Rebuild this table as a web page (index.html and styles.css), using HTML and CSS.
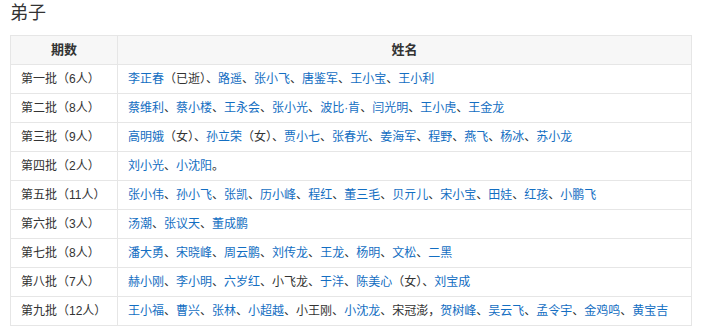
FILE: index.html
```html
<!DOCTYPE html>
<html lang="zh">
<head>
<meta charset="utf-8">
<link rel="stylesheet" href="styles.css">
</head>
<body>
<div class="page">
  <h2 class="title">弟子</h2>
  <table class="disciples">
    <colgroup><col class="c1"><col class="c2"></colgroup>
    <thead>
      <tr><th>期数</th><th>姓名</th></tr>
    </thead>
    <tbody>
      <tr><td>第一批（6人）</td><td><a>李正春</a>（已逝）、<a>路遥</a>、<a>张小飞</a>、<a>唐鉴军</a>、<a>王小宝</a>、<a>王小利</a></td></tr>
      <tr><td>第二批（8人）</td><td><a>蔡维利</a>、<a>蔡小楼</a>、<a>王永会</a>、<a>张小光</a>、<a>波比·肯</a>、<a>闫光明</a>、<a>王小虎</a>、<a>王金龙</a></td></tr>
      <tr><td>第三批（9人）</td><td><a>高明娥</a>（女）、<a>孙立荣</a>（女）、<a>贾小七</a>、<a>张春光</a>、<a>姜海军</a>、<a>程野</a>、<a>燕飞</a>、<a>杨冰</a>、<a>苏小龙</a></td></tr>
      <tr><td>第四批（2人）</td><td><a>刘小光</a>、<a>小沈阳</a>。</td></tr>
      <tr><td>第五批（11人）</td><td><a>张小伟</a>、<a>孙小飞</a>、<a>张凯</a>、<a>历小峰</a>、<a>程红</a>、<a>董三毛</a>、<a>贝亓儿</a>、<a>宋小宝</a>、<a>田娃</a>、<a>红孩</a>、<a>小鹏飞</a></td></tr>
      <tr><td>第六批（3人）</td><td><a>汤潮</a>、<a>张议天</a>、<a>董成鹏</a></td></tr>
      <tr><td>第七批（8人）</td><td><a>潘大勇</a>、<a>宋晓峰</a>、<a>周云鹏</a>、<a>刘传龙</a>、<a>王龙</a>、<a>杨明</a>、<a>文松</a>、<a>二黑</a></td></tr>
      <tr><td>第八批（7人）</td><td><a>赫小刚</a>、<a>李小明</a>、<a>六岁红</a>、小飞龙、<a>于洋</a>、<a>陈美心</a>（女）、<a>刘宝成</a></td></tr>
      <tr><td>第九批（12人）</td><td><a>王小福</a>、<a>曹兴</a>、<a>张林</a>、<a>小超越</a>、小王刚、<a>小沈龙</a>、宋冠澎，<a>贺树峰</a>、<a>吴云飞</a>、<a>孟令宇</a>、<a>金鸡鸣</a>、<a>黄宝吉</a></td></tr>
    </tbody>
  </table>
</div>
</body>
</html>
```
FILE: styles.css
```css
html, body {
  margin: 0;
  padding: 0;
  background: #fff;
}
body {
  font-family: "Liberation Sans", "Noto Sans CJK SC", sans-serif;
  font-size: 12px;
  color: #333;
}
.page {
  width: 682px;
  padding: 1px 10px 0 10px;
}
.title {
  margin: 0 0 10px 0;
  font-size: 18px;
  font-weight: normal;
  line-height: 24px;
  color: #333;
}
.disciples {
  width: 682px;
  border-collapse: collapse;
  table-layout: fixed;
}
.c1 { width: 107px; }
.disciples th,
.disciples td {
  border: 1px solid #e6e6e6;
  height: 29px;
  padding: 0 10px;
  line-height: 20px;
  box-sizing: border-box;
  white-space: nowrap;
}
.disciples th {
  background: #f7f7f7;
  font-size: 13px;
  font-weight: bold;
  text-align: center;
  color: #333;
}
.disciples td {
  text-align: left;
  font-size: 12px;
}
.disciples a {
  color: #136ec2;
  text-decoration: none;
}
```
